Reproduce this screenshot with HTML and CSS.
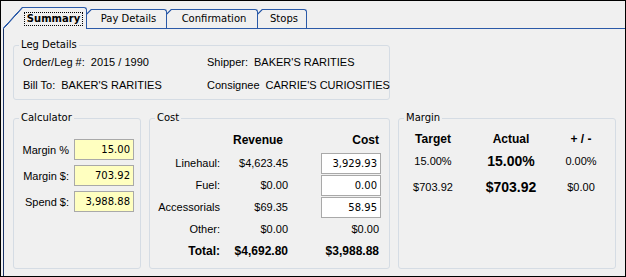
FILE: index.html
```html
<!DOCTYPE html>
<html lang="en">
<head>
  <meta charset="UTF-8" />
  <title>Leg Summary</title>
  <link rel="stylesheet" href="styles.css">
</head>
<body>

  <div class="window">
    <div class="tabs">
      <div class="tab tab-active"><span class="focus">Summary</span></div>
      <div class="tab tab-pay">Pay Details</div>
      <div class="tab tab-conf">Confirmation</div>
      <div class="tab tab-stops">Stops</div>
    </div>

    <div class="panel">
      <fieldset class="group leg">
        <legend>Leg Details</legend>
        <div class="leg-grid">
          <div><span>Order/Leg #:</span><span class="val">2015 / 1990</span></div>
          <div><span>Shipper:</span><span class="val">BAKER'S RARITIES</span></div>
          <div><span>Bill To:</span><span class="val">BAKER'S RARITIES</span></div>
          <div><span>Consignee</span><span class="val">CARRIE'S CURIOSITIES</span></div>
        </div>
      </fieldset>

      <div class="row">
        <fieldset class="group calc">
          <legend>Calculator</legend>
          <div class="calc-grid">
            <label>Margin %</label>
            <input class="num yellow" value="15.00" readonly>
            <label>Margin $:</label>
            <input class="num yellow" value="703.92" readonly>
            <label>Spend $:</label>
            <input class="num yellow" value="3,988.88" readonly>
          </div>
        </fieldset>

        <fieldset class="group cost">
          <legend>Cost</legend>
          <div class="cost-grid">
            <div></div>
            <div class="head rev-head">Revenue</div>
            <div class="head c3">Cost</div>

            <div>Linehaul:</div>
            <div>$4,623.45</div>
            <input class="num" value="3,929.93" readonly>

            <div>Fuel:</div>
            <div>$0.00</div>
            <input class="num" value="0.00" readonly>

            <div>Accessorials</div>
            <div>$69.35</div>
            <input class="num" value="58.95" readonly>

            <div>Other:</div>
            <div>$0.00</div>
            <div class="c3">$0.00</div>

            <div class="total">Total:</div>
            <div class="total">$4,692.80</div>
            <div class="total c3">$3,988.88</div>
          </div>
        </fieldset>

        <fieldset class="group margin">
          <legend>Margin</legend>
          <div class="margin-grid">
            <div class="head">Target</div>
            <div class="head">Actual</div>
            <div class="head">+ / -</div>

            <div>15.00%</div>
            <div class="big">15.00%</div>
            <div>0.00%</div>

            <div>$703.92</div>
            <div class="big">$703.92</div>
            <div>$0.00</div>
          </div>
        </fieldset>
      </div>
    </div>
  </div>

</body>
</html>
```

FILE: styles.css
```css
body {
  margin: 0;
  font-family: "Liberation Sans", Arial, sans-serif;
  font-size: 11px;
  color: #000;
}
.window {
  width: 626px;
  height: 277px;
  box-sizing: border-box;
  border: 1px solid #000;
  background: #f0f0f0;
  overflow: hidden;
}

/* tab strip */
.tabs {
  display: flex;
  align-items: flex-end;
  height: 27px;
  padding-left: 2px;
  font-family: "DejaVu Sans", sans-serif;
  font-size: 10px;
}
.tab {
  position: relative;
  box-sizing: border-box;
  height: 19px;
  margin-left: -14px;
  padding: 0 0 0 18px;
  border-top: 1px solid #2b5aa8;
  border-right: 1px solid #2b5aa8;
  border-top-right-radius: 3px;
  background: #f0f0f0;
  line-height: 18px;
  text-align: center;
}
.tab::before {
  content: "";
  position: absolute;
  left: 0;
  top: -1px;
  width: 19px;
  height: 19px;
  background: linear-gradient(to bottom right, #f0f0f0 calc(50% - 1px), #2b5aa8 calc(50% - 0.5px), #2b5aa8 calc(50% + 0.3px), transparent calc(50% + 0.8px));
}
.tab-active {
  width: 84px;
  height: 22px;
  margin-left: 0;
  margin-bottom: -1px;
  padding-top: 4px;
  line-height: 12px;
  z-index: 4;
}
.tab-active::before {
  width: 20px;
  height: 22px;
}
.tab-pay {
  width: 94px;
  z-index: 3;
}
.tab-conf {
  width: 105px;
  z-index: 2;
}
.tab-stops {
  width: 63px;
  z-index: 1;
}
.focus {
  display: inline-block;
  padding: 0 2px;
  border: 1px dotted #000;
  font-weight: bold;
}

/* tab page */
.panel {
  height: 260px;
  margin-left: 2px;
  padding: 10px 0 0 9px;
  border-left: 1px solid #1a3366;
  border-top: 1px solid #2b5aa8;
}
.group {
  box-sizing: border-box;
  margin: 0;
  padding: 0;
  min-width: 0;
  border: 1px solid #d5dce4;
  border-radius: 3px;
}
.group legend {
  margin-left: 5px;
  padding: 0 2px;
  font-family: "DejaVu Sans", sans-serif;
  font-size: 10px;
  line-height: 12px;
}
.leg {
  width: 377px;
}
.leg-grid {
  display: grid;
  grid-template-columns: 184px auto;
  padding: 0 0 2px 9px;
  line-height: 23px;
  white-space: nowrap;
}
.val {
  margin-left: 6px;
}

.row {
  display: flex;
  gap: 8px;
  height: 157px;
  margin-top: 12px;
}
.calc {
  width: 128px;
}
.cost {
  width: 241px;
}
.margin {
  width: 218px;
}

.num {
  box-sizing: border-box;
  width: 60px;
  height: 21px;
  margin: 0;
  padding: 0 3px;
  border: 1px solid #a9a9a9;
  background: #fff;
  font-family: "DejaVu Sans", sans-serif;
  font-size: 10px;
  text-align: right;
  color: #000;
}
.yellow {
  background: #ffffc0;
}

.calc-grid {
  display: grid;
  grid-template-columns: 55px 60px;
  column-gap: 5px;
  row-gap: 5px;
  padding-top: 15px;
  align-items: center;
}
.calc-grid label {
  text-align: right;
}

.cost-grid {
  display: grid;
  grid-template-columns: 70px 68px 93px;
  grid-template-rows: 25px repeat(5, 22px);
  padding-top: 3px;
  align-items: center;
  text-align: right;
  white-space: nowrap;
}
.cost-grid .num {
  justify-self: end;
}
.c3 {
  padding-right: 2px;
}
.rev-head {
  padding-right: 5px;
}
.head, .total {
  font-weight: bold;
  font-size: 12px;
}

.margin-grid {
  display: grid;
  grid-template-columns: 68px 88px 52px;
  grid-template-rows: 23px 22px 30px;
  padding-top: 3px;
  align-items: center;
  text-align: center;
}
.big {
  font-weight: bold;
  font-size: 14px;
}
```
